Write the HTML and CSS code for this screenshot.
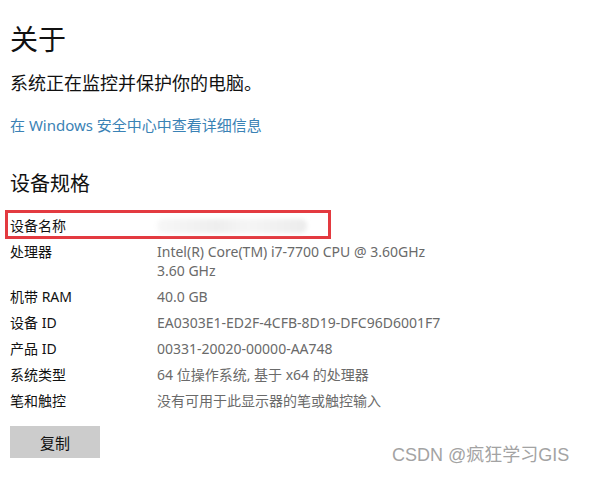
FILE: index.html
```html
<!DOCTYPE html>
<html lang="zh-CN">
<head>
    <meta charset="UTF-8">
    <meta name="viewport" content="width=device-width, initial-scale=1.0">
    <title>关于</title>
    <link rel="stylesheet" href="styles.css">
</head>
<body>
    <div class="about-page">
        <h1>关于</h1>
        <p class="status">系统正在监控并保护你的电脑。</p>
        <a class="details-link" href="#">在 Windows 安全中心中查看详细信息</a>

        <h2>设备规格</h2>
        <div class="spec-list">
            <div class="spec-row highlight">
                <span class="spec-label">设备名称</span>
                <span class="spec-value blurred"></span>
            </div>
            <div class="spec-row">
                <span class="spec-label">处理器</span>
                <span class="spec-value">Intel(R) Core(TM) i7-7700 CPU @ 3.60GHz<br>3.60 GHz</span>
            </div>
            <div class="spec-row">
                <span class="spec-label">机带 RAM</span>
                <span class="spec-value">40.0 GB</span>
            </div>
            <div class="spec-row">
                <span class="spec-label">设备 ID</span>
                <span class="spec-value">EA0303E1-ED2F-4CFB-8D19-DFC96D6001F7</span>
            </div>
            <div class="spec-row">
                <span class="spec-label">产品 ID</span>
                <span class="spec-value">00331-20020-00000-AA748</span>
            </div>
            <div class="spec-row">
                <span class="spec-label">系统类型</span>
                <span class="spec-value">64 位操作系统, 基于 x64 的处理器</span>
            </div>
            <div class="spec-row">
                <span class="spec-label">笔和触控</span>
                <span class="spec-value">没有可用于此显示器的笔或触控输入</span>
            </div>
        </div>

        <button class="copy-btn" type="button">复制</button>
    </div>

    <div class="watermark">CSDN @疯狂学习GIS</div>
</body>
</html>
```

FILE: styles.css
```css
:root {
    --text-dark: #111111;
    --text-muted: #6a6a6a;
    --link-color: #3a82b5;
    --box-red: #e33a40;
    --btn-gray: #cccccc;
}

* {
    margin: 0;
    padding: 0;
    box-sizing: border-box;
    font-family: 'Noto Sans', 'Noto Sans CJK SC', sans-serif;
}

body {
    background: #ffffff;
    color: var(--text-dark);
    width: 591px;
    height: 477px;
    position: relative;
    overflow: hidden;
}

.about-page {
    padding-left: 10px;
    padding-top: 21px;
}

h1 {
    font-size: 28px;
    font-weight: 400;
    line-height: 36px;
    margin-bottom: 14px;
}

.status {
    font-size: 18px;
    line-height: 24px;
    margin-bottom: 20px;
}

.details-link {
    display: block;
    font-size: 15px;
    line-height: 20px;
    color: var(--link-color);
    text-decoration: none;
    margin-bottom: 35px;
}

h2 {
    font-size: 20px;
    font-weight: 400;
    line-height: 28px;
    margin-bottom: 12px;
}

.spec-list {
    font-size: 14px;
}

.spec-row {
    display: grid;
    grid-template-columns: 147px auto;
    line-height: 19px;
    padding: 3px 0 4px;
}

.spec-row.highlight {
    width: 326px;
    margin-left: -5px;
    padding: 3px 0 1px 2px;
    border: 3px solid var(--box-red);
}

.spec-label {
    color: var(--text-dark);
}

.spec-value {
    color: var(--text-muted);
}

/* name hidden in the screenshot */
.spec-value.blurred {
    width: 150px;
    height: 14px;
    margin-top: 3px;
    background: linear-gradient(90deg, #f7f7f7, #eeeeee 40%, #f5f5f5 60%, #ececec);
    border-radius: 6px;
    filter: blur(2px);
}

.copy-btn {
    display: block;
    width: 90px;
    height: 32px;
    margin-top: 12px;
    background: var(--btn-gray);
    border: none;
    font-size: 15px;
    color: var(--text-dark);
    cursor: pointer;
}

.watermark {
    position: absolute;
    left: 392px;
    top: 444px;
    font-size: 18px;
    line-height: 22px;
    color: #a3a3a3;
    font-family: 'Liberation Sans', 'Noto Sans CJK SC', sans-serif;
}
```
